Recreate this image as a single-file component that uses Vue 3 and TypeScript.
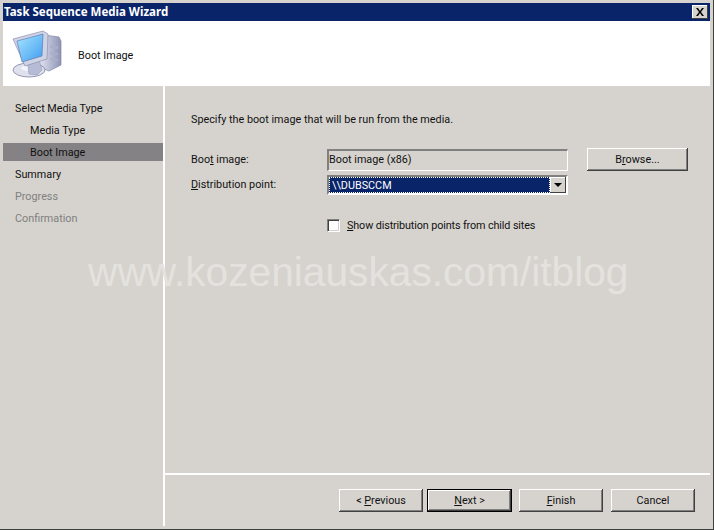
<script setup lang="ts">
const steps: { label: string; cls: string }[] = [
  { label: 'Select Media Type', cls: 'top' },
  { label: 'Media Type', cls: 'sub' },
  { label: 'Boot Image', cls: 'sub active' },
  { label: 'Summary', cls: 'top' },
  { label: 'Progress', cls: 'top off' },
  { label: 'Confirmation', cls: 'top off' },
]
</script>

<template>
  <div class="window">
    <div class="titlebar">
      <span class="title">Task Sequence Media Wizard</span>
      <span class="close">
        <svg width="16" height="14" viewBox="0 0 16 14"><path d="M4 3l2 0 2 3 2-3 2 0-3 4 3 4-2 0-2-3-2 3-2 0 3-4z" fill="#000" /></svg>
      </span>
    </div>
    <header class="header">
      <svg class="icon" width="52" height="50" viewBox="0 0 52 50">
        <defs>
          <linearGradient id="scr" x1="0" y1="0" x2="1" y2="1">
            <stop offset="0" stop-color="#a8e6ff" />
            <stop offset="1" stop-color="#3f9cf0" />
          </linearGradient>
          <linearGradient id="box" x1="0" y1="0" x2="1" y2="0">
            <stop offset="0" stop-color="#eceef7" />
            <stop offset="1" stop-color="#8d93b4" />
          </linearGradient>
        </defs>
        <path d="M32 6l15 2 2 4v24l-12 6-12-5V9z" fill="url(#box)" stroke="#8288a8" stroke-width=".7" />
        <path d="M38 16l8 1v3l-8-1zM38 23l8 1v2l-8-1zM38 29l8 1v2l-8-1z" fill="#a9afcb" />
        <ellipse cx="17" cy="41" rx="16" ry="7" fill="#dfe2ee" stroke="#7d829e" stroke-width=".8" />
        <ellipse cx="17" cy="39" rx="8" ry="3" fill="#f4f5fb" />
        <path d="M15 30h12l3 11-5 5-8-1z" fill="#b7bcd6" stroke="#8c91ac" stroke-width=".5" />
        <path d="M1 10L31 2l5 3-1 25-22 7z" fill="#cfd3e6" stroke="#8c91ac" stroke-width=".7" />
        <path d="M5 12l26-7-1 22-20 6z" fill="url(#scr)" stroke="#5a6fa8" stroke-width=".6" />
      </svg>
      <span class="header-text">Boot Image</span>
    </header>
    <div class="body">
      <nav class="side">
        <div v-for="s in steps" :key="s.label" class="step" :class="s.cls">{{ s.label }}</div>
      </nav>
      <main class="main">
        <div class="content">
          <p class="intro">Specify the boot image that will be run from the media.</p>
          <div class="form">
            <label class="lab">Boo<u>t</u> image:</label>
            <div class="input">Boot image (x86)</div>
            <button class="btn browse">B<u>r</u>owse...</button>
            <label class="lab lab2"><u>D</u>istribution point:</label>
            <div class="select">
              <div class="sel-value"><span>\\DUBSCCM</span></div>
              <span class="arrow"><i></i></span>
            </div>
            <span></span>
            <span></span>
            <label class="check"><span class="box"></span><span class="check-text"><u>S</u>how distribution points from child sites</span></label>
          </div>
        </div>
        <footer class="footer">
          <button class="btn">&lt; <u>P</u>revious</button>
          <button class="btn default"><u>N</u>ext &gt;</button>
          <button class="btn finish"><u>F</u>inish</button>
          <button class="btn cancel">Cancel</button>
        </footer>
      </main>
    </div>
    <div class="mark">www.kozeniauskas.com/itblog</div>
  </div>
</template>

<style>
html, body { margin: 0; background: #d6d3ce; }
</style>

<style scoped>
.window {
  position: relative;
  box-sizing: border-box;
  width: 714px;
  height: 530px;
  padding: 3px;
  background: #d6d3ce;
  border-right: 1px solid #404040;
  border-bottom: 1px solid #404040;
  display: flex;
  flex-direction: column;
  font: 10.8px/13px Roboto, sans-serif;
  color: #111;
  overflow: hidden;
}
.titlebar {
  height: 18px;
  background: #0a246a;
  display: flex;
  align-items: center;
  justify-content: space-between;
  padding: 0 2px;
  flex: none;
}
.title {
  color: #fff;
  font: bold 11.5px/18px "Noto Sans", sans-serif;
  margin-left: -1px;
}
.close {
  width: 16px;
  height: 14px;
  background: #d6d3ce;
  box-shadow: inset -1px -1px #404040, inset 1px 1px #fff;
  display: block;
  line-height: 0;
}
.header {
  height: 65px;
  flex: none;
  background: #fff;
  display: flex;
  align-items: center;
  padding-left: 9px;
}
.icon { flex: none; }
.header-text { margin-left: 14px; margin-top: 3px; }
.body { flex: 1; display: flex; min-height: 0; }
.side {
  width: 160px;
  flex: none;
  padding-top: 11px;
  border-right: 2px solid #fff;
}
.step { height: 22px; line-height: 24px; padding-left: 12px; }
.step.sub { padding-left: 27px; }
.step.active { background: #848284; height: 18px; line-height: 20px; margin: 2px 0; }
.step.off { color: #808080; }
.main { flex: 1; display: flex; flex-direction: column; min-width: 0; }
.content { flex: 1; padding: 27px 0 0 26px; }
.intro { margin: 0; line-height: 14px; height: 14px; }
.form {
  margin-top: 21px;
  display: grid;
  grid-template-columns: 136px 241px 120px;
  align-items: center;
}
.lab2 { margin-top: 3px; }
.input {
  box-sizing: border-box;
  height: 22px;
  line-height: 17px;
  padding-left: 0;
  border: 1px solid;
  border-color: #808080 #fff #fff #808080;
  border-top-width: 2px;
  border-left-width: 2px;
}
.btn {
  width: 84px;
  height: 23px;
  padding: 0;
  border: 0;
  background: #d6d3ce;
  font: inherit;
  color: #111;
  box-shadow: inset -1px -1px #404040, inset 1px 1px #fff, inset -2px -2px #808080;
}
.btn.browse { margin-left: 19px; width: 101px; height: 23px; margin-top: 0; }
.select {
  box-sizing: border-box;
  height: 20px;
  margin-top: 4px;
  display: flex;
  border: 2px solid;
  border-color: #808080 #fff #fff #808080;
  background: #fff;
}
.sel-value {
  flex: 1;
  background: #0a246a;
  color: #fff;
  padding-left: 3px;
  line-height: 17px;
  outline: 1px dotted #fff;
  outline-offset: -1px;
}
.arrow {
  width: 16px;
  flex: none;
  background: #d6d3ce;
  box-shadow: inset -1px -1px #404040, inset 1px 1px #fff;
  display: flex;
  align-items: center;
  justify-content: center;
}
.arrow i {
  width: 0;
  height: 0;
  border: 4px solid transparent;
  border-top: 4px solid #000;
  border-bottom: 0;
}
.check {
  grid-column: 2 / 4;
  margin-top: 24px;
  display: flex;
  align-items: center;
  gap: 7px;
}
.check-text { letter-spacing: -0.12px; }
.box {
  box-sizing: border-box;
  width: 13px;
  height: 13px;
  background: #fff;
  border: 1px solid;
  border-color: #808080 #fff #fff #808080;
  box-shadow: inset 1px 1px #404040, inset -1px -1px #d6d3ce;
}
.footer {
  flex: none;
  height: 53px;
  box-sizing: border-box;
  border-top: 2px solid #fff;
  padding: 14px 15px 0 0;
  display: flex;
  justify-content: flex-end;
  align-items: flex-start;
}
.footer .btn + .btn { margin-left: 4px; }
.footer .btn.finish { margin-left: 7px; }
.footer .btn.cancel { margin-left: 8px; }
.btn.default {
  width: 85px;
  box-shadow: inset 0 0 0 1px #000, inset -2px -2px #404040, inset 2px 2px #fff, inset -3px -3px #808080;
}
.mark {
  position: absolute;
  left: 88px;
  top: 250px;
  font: 40.7px/44px "Liberation Sans", sans-serif;
  color: #e4e2de;
  white-space: nowrap;
  pointer-events: none;
}
</style>
